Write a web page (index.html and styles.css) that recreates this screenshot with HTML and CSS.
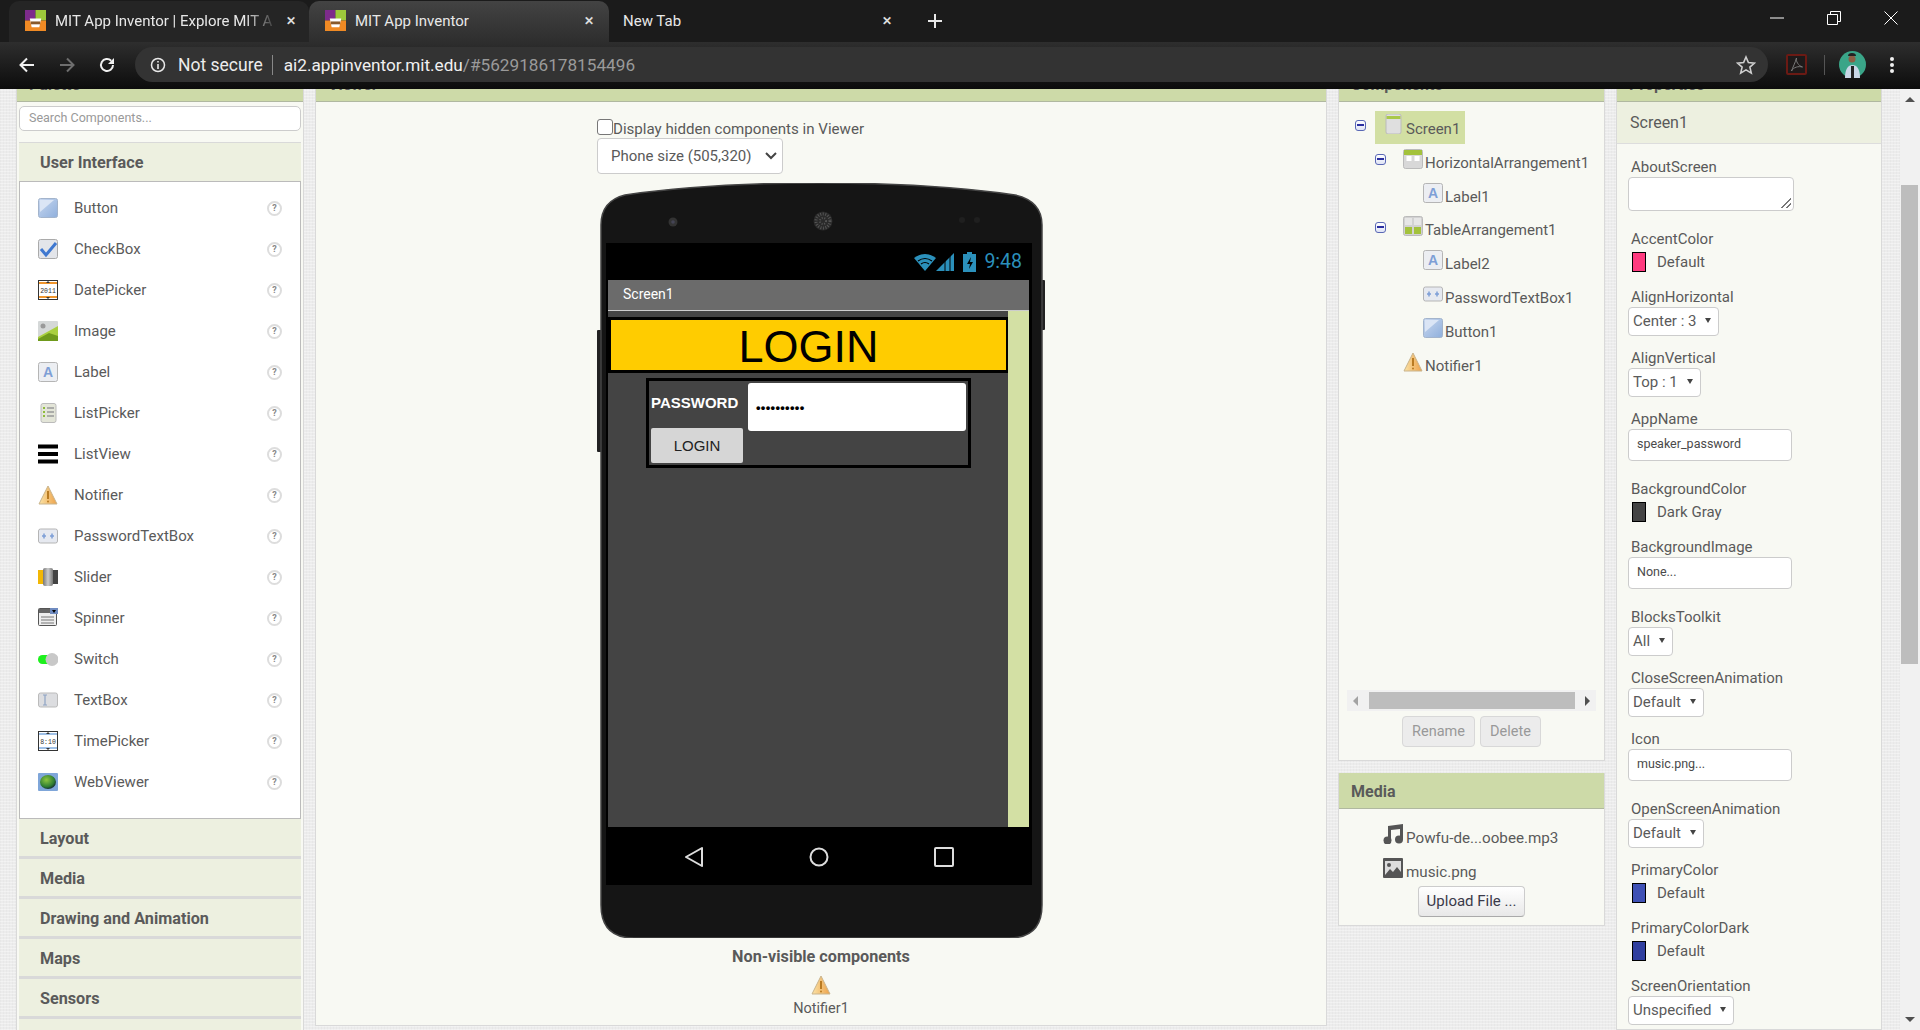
FILE: index.html
```html
<!DOCTYPE html>
<html lang="en">
<head>
  <meta charset="UTF-8">
  <title>MIT App Inventor</title>
  <link rel="stylesheet" href="styles.css">
</head>
<body>
  <svg class="sprites" width="0" height="0">
    <defs>
      <linearGradient id="g-btn" x1="0" y1="0" x2="1" y2="1"><stop offset="0" stop-color="#c9d8ef"/><stop offset="1" stop-color="#8fafdc"/></linearGradient>
      <linearGradient id="g-warn" x1="0" y1="0" x2="1" y2="0"><stop offset="0" stop-color="#fbe3a6"/><stop offset="1" stop-color="#eda24a"/></linearGradient>
      <linearGradient id="g-knob" x1="0" y1="0" x2="1" y2="0"><stop offset="0" stop-color="#777"/><stop offset=".5" stop-color="#ccc"/><stop offset="1" stop-color="#777"/></linearGradient>
      <radialGradient id="g-globe" cx=".4" cy=".35" r=".7"><stop offset="0" stop-color="#8dc63f"/><stop offset=".7" stop-color="#2e7d32"/><stop offset="1" stop-color="#123"/></radialGradient>
    </defs>
    <symbol id="i-button" viewBox="0 0 20 20"><rect x=".5" y=".5" width="19" height="19" rx="2" fill="url(#g-btn)" stroke="#a3b4cc"/><path d="M2 2h14L2 14z" fill="#dbe5f5"/></symbol>
    <symbol id="i-check" viewBox="0 0 20 20"><rect x=".5" y=".5" width="19" height="19" rx="2" fill="#e3e5ea" stroke="#aaa"/><path d="M3 10l5 6L18 4" fill="none" stroke="#3f78d0" stroke-width="3"/></symbol>
    <symbol id="i-date" viewBox="0 0 20 20"><rect x=".5" y=".5" width="19" height="19" fill="#fff" stroke="#333"/><path d="M1 3h18M1 17h18" stroke="#f0962e" stroke-width="2"/><path d="M10 1l-2 2h4zM10 19l-2-2h4z" fill="#333"/></symbol>
    <symbol id="i-image" viewBox="0 0 20 20"><rect width="20" height="20" rx="1" fill="#d5d8d8"/><circle cx="5" cy="5" r="2.500" fill="#999"/><path d="M0 16L20 5v15H0z" fill="#a9cf3f"/><path d="M0 18l11-6 9 3v5H0z" fill="#6f9a1c"/></symbol>
    <symbol id="i-label" viewBox="0 0 20 20"><rect x=".5" y=".5" width="19" height="19" rx="2" fill="#eceef2" stroke="#b5b5b5"/></symbol>
    <symbol id="i-listpicker" viewBox="0 0 20 20"><rect x="3" y=".5" width="15" height="19" rx="2" fill="#e3e5d8" stroke="#bbb"/><path d="M5 5h2M5 9h2M5 13h2" stroke="#8dbb3a" stroke-width="2"/><path d="M9 5h7M9 9h7M9 13h7" stroke="#999" stroke-width="1.500"/></symbol>
    <symbol id="i-listview" viewBox="0 0 20 20"><path d="M0 2.500h20M0 10h20M0 17.500h20" stroke="#000" stroke-width="4"/></symbol>
    <symbol id="i-notifier" viewBox="0 0 20 20"><path d="M10 1L1 19h18z" fill="url(#g-warn)" stroke="#c9b48c"/><path d="M10 6v8" stroke="#b97b22" stroke-width="2"/><circle cx="10" cy="16.500" r="1" fill="#b97b22"/></symbol>
    <symbol id="i-password" viewBox="0 0 20 20"><rect x=".5" y="3" width="19" height="14" rx="2" fill="#e6e9f0" stroke="#b5b5b5"/><path d="M6 7.500v5M4 10h4M14 7.500v5M12 10h4" stroke="#7e9fd6" stroke-width="1.500"/></symbol>
    <symbol id="i-slider" viewBox="0 0 20 20"><rect y="3" width="6" height="14" fill="#f2b705"/><rect x="14" y="3" width="6" height="14" fill="#444"/><rect x="5" y="1" width="10" height="18" rx="2" fill="url(#g-knob)"/></symbol>
    <symbol id="i-spinner" viewBox="0 0 20 20"><rect x=".5" y=".5" width="18" height="17" rx="1" fill="#eee" stroke="#555"/><rect x="1" y="1" width="12" height="4" fill="#666"/><rect x="12" y="0" width="8" height="6" fill="#6f8bc0"/><path d="M14 2h4l-2 3z" fill="#000"/><path d="M3 9h13M3 12h13M3 15h13" stroke="#777"/></symbol>
    <symbol id="i-switch" viewBox="0 0 20 20"><rect y="6" width="14" height="9" rx="4.500" fill="#1df01d"/><circle cx="14" cy="10.500" r="6.500" fill="#c8c8c8"/></symbol>
    <symbol id="i-textbox" viewBox="0 0 20 20"><rect x=".5" y="3" width="19" height="14" rx="2" fill="#dcdde0" stroke="#bbb"/><path d="M5 5h4M5 15h4M7 5v10" stroke="#8ea3c4" stroke-width="1.200" fill="none"/></symbol>
    <symbol id="i-time" viewBox="0 0 20 20"><rect x=".5" y=".5" width="19" height="19" fill="#fff" stroke="#333"/><path d="M1 3h18M1 17h18" stroke="#9fc0e6" stroke-width="2"/><path d="M10 1l-2 2h4zM10 19l-2-2h4z" fill="#333"/></symbol>
    <symbol id="i-web" viewBox="0 0 20 20"><rect y="1" width="20" height="18" rx="1" fill="#7fa6d9"/><ellipse cx="10" cy="10" rx="8" ry="7" fill="url(#g-globe)"/></symbol>
    <symbol id="i-screen" viewBox="0 0 20 20"><rect x="2" y="0" width="15" height="20" rx="2" fill="#dfdfdf" stroke="#bbb"/><path d="M2.500 2h14v3h-14z" fill="#a9c84a"/></symbol>
    <symbol id="i-harr" viewBox="0 0 20 20"><rect x=".5" y=".5" width="19" height="19" rx="2" fill="#d8d8d8" stroke="#bbb"/><path d="M1 1h18v5H1z" fill="#a3c23c"/><rect x="3.500" y="7" width="5" height="5" fill="#fff"/><rect x="11.500" y="7" width="5" height="5" fill="#fff"/></symbol>
    <symbol id="i-tarr" viewBox="0 0 20 20"><rect x=".5" y=".5" width="19" height="19" rx="2" fill="#d2d2d2" stroke="#bbb"/><rect x="2" y="2" width="7" height="7" fill="#e6e6e6"/><rect x="11" y="2" width="7" height="7" fill="#e6e6e6"/><rect x="2" y="11" width="7" height="7" fill="#a3c23c"/><rect x="11" y="11" width="7" height="7" fill="#a3c23c"/></symbol>
    <symbol id="i-music" viewBox="0 0 20 20"><path d="M5 2l15-2v15h-3V5L8 6v11H5z" fill="#555"/><circle cx="4.500" cy="16.500" r="4" fill="#555"/><circle cx="16" cy="15.500" r="4" fill="#555"/></symbol>
    <symbol id="i-file" viewBox="0 0 20 20"><rect width="20" height="20" rx="1" fill="#555"/><rect x="2" y="3" width="16" height="14" fill="#ddd"/><circle cx="6" cy="7" r="2" fill="#555"/><path d="M2 17l5-6 3 3 4-5 4 5v3z" fill="#555"/></symbol>
  </svg>

  <header class="chrome">
    <div class="tabstrip">
      <div class="tab">
        <svg class="favicon" viewBox="0 0 22 22"><rect width="11" height="11" fill="#7d2b8b"/><rect x="11" width="11" height="11" fill="#9cc93b"/><rect y="11" width="22" height="11" fill="#f08a24"/><path d="M5 9h12l-2 9H7z" fill="#fff"/><path d="M6 12h10v3H6z" fill="#8a5a2b"/></svg>
        <span class="tab-title fade">MIT App Inventor | Explore MIT A</span>
        <span class="tab-close">✕</span>
      </div>
      <div class="tab tab-active">
        <svg class="favicon" viewBox="0 0 22 22"><rect width="11" height="11" fill="#7d2b8b"/><rect x="11" width="11" height="11" fill="#9cc93b"/><rect y="11" width="22" height="11" fill="#f08a24"/><path d="M5 9h12l-2 9H7z" fill="#fff"/><path d="M6 12h10v3H6z" fill="#8a5a2b"/></svg>
        <span class="tab-title">MIT App Inventor</span>
        <span class="tab-close">✕</span>
      </div>
      <div class="tab tab-plain">
        <span class="tab-title">New Tab</span>
        <span class="tab-close">✕</span>
      </div>
      <svg class="newtab" viewBox="0 0 16 16"><path d="M8 1v14M1 8h14" stroke="#e8e8e8" stroke-width="2"/></svg>
      <div class="winbtns">
        <svg viewBox="0 0 14 14"><path d="M0 7h14" stroke="#fff"/></svg>
        <svg viewBox="0 0 14 14"><path d="M.5 3.500h10v10H.5zM3.500 3.500v-3h10v10h-3" fill="none" stroke="#fff"/></svg>
        <svg viewBox="0 0 14 14"><path d="M.5.500l13 13M13.500.500l-13 13" stroke="#fff"/></svg>
      </div>
    </div>
    <div class="toolbar">
      <svg class="tb-icon" viewBox="0 0 16 16"><path d="M15 8H2M8 1.500L1.500 8 8 14.500" fill="none" stroke="#f0f0f0" stroke-width="2"/></svg>
      <svg class="tb-icon" viewBox="0 0 16 16"><path d="M1 8h13M8 1.500L14.500 8 8 14.500" fill="none" stroke="#6e6e6e" stroke-width="2"/></svg>
      <svg class="tb-icon" viewBox="0 0 16 16"><path d="M14 8a6 6 0 1 1-1.800-4.300" fill="none" stroke="#f0f0f0" stroke-width="2"/><path d="M15 1v6H9z" fill="#f0f0f0"/></svg>
      <div class="omnibox">
        <svg class="info" viewBox="0 0 16 16"><circle cx="8" cy="8" r="6.500" fill="none" stroke="#e8e8e8" stroke-width="1.500"/><path d="M8 7v5M8 4v1.600" stroke="#e8e8e8" stroke-width="1.600"/></svg>
        <span class="not-secure">Not secure</span>
        <span class="omni-sep"></span>
        <span class="url">ai2.appinventor.mit.edu<span class="url-dim">/#5629186178154496</span></span>
        <svg class="star" viewBox="0 0 20 20"><path d="M10 2l2.400 5.600 6.100.5-4.600 4 1.400 6L10 14.900 4.700 18.100l1.400-6-4.600-4 6.100-.5z" fill="none" stroke="#cfcfcf" stroke-width="1.600"/></svg>
      </div>
      <svg class="pdf" viewBox="0 0 21 21"><rect x="1" y="1" width="19" height="19" rx="1" fill="#1e1a1a" stroke="#6b1a14" stroke-width="2"/><path d="M10.500 4c-1 3 2 8 6 9-4-1-9 0-11 4 1-3 4-9 5-13z" fill="none" stroke="#7a7a7a"/></svg>
      <span class="tb-sep"></span>
      <svg class="avatar" viewBox="0 0 27 27"><circle cx="13.500" cy="13.500" r="13.500" fill="#3aa588"/><path d="M6 27c0-9 3-13 7.500-13S21 18 21 27z" fill="#c9d6e6"/><path d="M12 15h3v12h-3z" fill="#222"/><circle cx="13" cy="8" r="3.500" fill="#8a5f45"/><path d="M9 5a4 3 0 0 1 8 0z" fill="#222"/></svg>
      <svg class="dots" viewBox="0 0 4 16"><circle cx="2" cy="2" r="2" fill="#f0f0f0"/><circle cx="2" cy="8" r="2" fill="#f0f0f0"/><circle cx="2" cy="14" r="2" fill="#f0f0f0"/></svg>
    </div>
  </header>

  <main class="page">
    <section class="panel palette">
      <div class="panel-head">Palette</div>
      <div class="palette-inner">
        <div class="search">Search Components...</div>
        <div class="cat cat-open">User Interface</div>
        <ul class="comp-list">
          <li><svg class="icon"><use href="#i-button"/></svg><span class="comp-name">Button</span><span class="help">?</span></li>
          <li><svg class="icon"><use href="#i-check"/></svg><span class="comp-name">CheckBox</span><span class="help">?</span></li>
          <li><svg class="icon" viewBox="0 0 20 20"><use href="#i-date"/><text x="10" y="13" class="icon-text">2011</text></svg><span class="comp-name">DatePicker</span><span class="help">?</span></li>
          <li><svg class="icon"><use href="#i-image"/></svg><span class="comp-name">Image</span><span class="help">?</span></li>
          <li><svg class="icon" viewBox="0 0 20 20"><use href="#i-label"/><text x="10" y="15" class="icon-letter">A</text></svg><span class="comp-name">Label</span><span class="help">?</span></li>
          <li><svg class="icon"><use href="#i-listpicker"/></svg><span class="comp-name">ListPicker</span><span class="help">?</span></li>
          <li><svg class="icon"><use href="#i-listview"/></svg><span class="comp-name">ListView</span><span class="help">?</span></li>
          <li><svg class="icon"><use href="#i-notifier"/></svg><span class="comp-name">Notifier</span><span class="help">?</span></li>
          <li><svg class="icon"><use href="#i-password"/></svg><span class="comp-name">PasswordTextBox</span><span class="help">?</span></li>
          <li><svg class="icon"><use href="#i-slider"/></svg><span class="comp-name">Slider</span><span class="help">?</span></li>
          <li><svg class="icon"><use href="#i-spinner"/></svg><span class="comp-name">Spinner</span><span class="help">?</span></li>
          <li><svg class="icon"><use href="#i-switch"/></svg><span class="comp-name">Switch</span><span class="help">?</span></li>
          <li><svg class="icon"><use href="#i-textbox"/></svg><span class="comp-name">TextBox</span><span class="help">?</span></li>
          <li><svg class="icon" viewBox="0 0 20 20"><use href="#i-time"/><text x="10" y="13" class="icon-text">8:10</text></svg><span class="comp-name">TimePicker</span><span class="help">?</span></li>
          <li><svg class="icon"><use href="#i-web"/></svg><span class="comp-name">WebViewer</span><span class="help">?</span></li>
        </ul>
        <div class="cat">Layout</div>
        <div class="cat">Media</div>
        <div class="cat">Drawing and Animation</div>
        <div class="cat">Maps</div>
        <div class="cat">Sensors</div>
        <div class="cat"></div>
      </div>
    </section>

    <section class="panel viewer">
      <div class="panel-head">Viewer</div>
      <div class="viewer-body">
        <label class="hidden-toggle"><span class="fake-check"></span>Display hidden components in Viewer</label>
        <div class="size-select">Phone size (505,320)<svg viewBox="0 0 12 8"><path d="M1 1l5 5 5-5" fill="none" stroke="#444" stroke-width="2"/></svg></div>

        <div class="phone">
          <svg class="phone-shell" viewBox="0 0 450 755">
            <rect x="0" y="147" width="8" height="122" rx="1" fill="#222"/>
            <rect x="442" y="97" width="6" height="50" rx="1" fill="#222"/>
            <path d="M4 42Q4 18 28 12Q110 0 223 0Q336 0 418 12Q445 18 445 42V722Q445 755 412 755H37Q4 755 4 722Z" fill="#151515" stroke="#444" stroke-width="1.500"/>
            <circle cx="76" cy="39" r="4.500" fill="#333"/>
            <circle cx="76" cy="39" r="1.800" fill="#445"/>
            <circle cx="226" cy="38" r="9.500" fill="#2a2a2a"/>
            <circle cx="226" cy="38" r="7" fill="none" stroke="#555" stroke-width="3" stroke-dasharray="1 1.500"/>
            <circle cx="226" cy="38" r="3" fill="none" stroke="#555" stroke-width="2" stroke-dasharray="1 1.500"/>
            <circle cx="365" cy="37" r="3" fill="#1f1f1f"/>
            <circle cx="380" cy="37" r="3" fill="#1f1f1f"/>
          </svg>
          <div class="screen">
            <div class="statusbar">
              <svg class="status-icons" viewBox="0 0 62 20"><path d="M0 6Q11-2 22 6L11 19z" fill="#2b90bb"/><path d="M4 9Q11 4 18 9M7 12Q11 9 15 12" stroke="#000" stroke-width="1.200" fill="none"/><path d="M22 19L40 1v18z" fill="#2b90bb"/><path d="M31 19V9M36 19V4" stroke="#000"/><rect x="49" y="2" width="13" height="18" fill="#2b90bb"/><rect x="53" y="0" width="5" height="2" fill="#2b90bb"/><path d="M57 5l-4 7h3l-1 5 4-7h-3z" fill="#000"/></svg>
              <span class="clock">9:48</span>
            </div>
            <div class="titlebar">Screen1</div>
            <div class="app-area">
              <div class="app-form">
                <div class="login-title">LOGIN</div>
                <div class="login-table">
                  <div class="pw-label">PASSWORD</div>
                  <div class="pw-input">••••••••••</div>
                  <div class="login-btn">LOGIN</div>
                </div>
              </div>
              <div class="app-scroll"></div>
            </div>
            <div class="navbar">
              <svg viewBox="0 0 20 22"><path d="M18 2L2 11l16 9z" fill="none" stroke="#ddd" stroke-width="2" stroke-linejoin="round"/></svg>
              <svg viewBox="0 0 20 22"><circle cx="10" cy="11" r="8.500" fill="none" stroke="#ddd" stroke-width="2"/></svg>
              <svg viewBox="0 0 20 22"><rect x="1" y="2" width="18" height="18" rx="1" fill="none" stroke="#ddd" stroke-width="2"/></svg>
            </div>
          </div>
        </div>
        <div class="nonvisible">
          <div class="nv-title">Non-visible components</div>
          <svg class="nv-icon"><use href="#i-notifier"/></svg>
          <div class="nv-name">Notifier1</div>
        </div>
      </div>
    </section>

    <div class="side-col">
      <section class="panel components">
        <div class="panel-head">Components</div>
        <div class="tree">
          <div class="tree-row row-root"><span class="minus"></span><span class="selected"><svg class="icon"><use href="#i-screen"/></svg>Screen1</span></div>
          <div class="tree-row lvl1"><span class="minus"></span><svg class="icon"><use href="#i-harr"/></svg>HorizontalArrangement1</div>
          <div class="tree-row lvl2"><svg class="icon" viewBox="0 0 20 20"><use href="#i-label"/><text x="10" y="15" class="icon-letter">A</text></svg>Label1</div>
          <div class="tree-row lvl1"><span class="minus"></span><svg class="icon"><use href="#i-tarr"/></svg>TableArrangement1</div>
          <div class="tree-row lvl2"><svg class="icon" viewBox="0 0 20 20"><use href="#i-label"/><text x="10" y="15" class="icon-letter">A</text></svg>Label2</div>
          <div class="tree-row lvl2"><svg class="icon"><use href="#i-password"/></svg>PasswordTextBox1</div>
          <div class="tree-row lvl2"><svg class="icon"><use href="#i-button"/></svg>Button1</div>
          <div class="tree-row lvl1 no-minus"><svg class="icon"><use href="#i-notifier"/></svg>Notifier1</div>
        </div>
        <div class="hscroll">
          <span class="arrow-left"></span>
          <span class="hthumb"></span>
          <span class="arrow-right"></span>
        </div>
        <div class="comp-btns">
          <span class="btn-off">Rename</span>
          <span class="btn-off">Delete</span>
        </div>
      </section>

      <section class="panel media">
        <div class="panel-head">Media</div>
        <div class="media-row"><svg class="icon"><use href="#i-music"/></svg>Powfu-de...oobee.mp3</div>
        <div class="media-row"><svg class="icon"><use href="#i-file"/></svg>music.png</div>
        <div class="upload">Upload File ...</div>
      </section>
    </div>

    <section class="panel props">
      <div class="panel-head">Properties</div>
      <div class="props-title">Screen1</div>
      <div class="props-body">
        <div class="prop prop-area"><div class="prop-name">AboutScreen</div><div class="textarea"></div></div>
        <div class="prop prop-color"><div class="prop-name">AccentColor</div><div class="color-row"><span class="swatch swatch-pink"></span>Default</div></div>
        <div class="prop prop-select"><div class="prop-name">AlignHorizontal</div><div class="dropdown">Center : 3</div></div>
        <div class="prop prop-select"><div class="prop-name">AlignVertical</div><div class="dropdown">Top : 1</div></div>
        <div class="prop prop-input"><div class="prop-name">AppName</div><div class="textbox">speaker_password</div></div>
        <div class="prop prop-color"><div class="prop-name">BackgroundColor</div><div class="color-row"><span class="swatch swatch-gray"></span>Dark Gray</div></div>
        <div class="prop prop-input"><div class="prop-name">BackgroundImage</div><div class="textbox">None...</div></div>
        <div class="prop prop-select"><div class="prop-name">BlocksToolkit</div><div class="dropdown">All</div></div>
        <div class="prop prop-select"><div class="prop-name">CloseScreenAnimation</div><div class="dropdown">Default</div></div>
        <div class="prop prop-input"><div class="prop-name">Icon</div><div class="textbox">music.png...</div></div>
        <div class="prop prop-select"><div class="prop-name">OpenScreenAnimation</div><div class="dropdown">Default</div></div>
        <div class="prop prop-color"><div class="prop-name">PrimaryColor</div><div class="color-row"><span class="swatch swatch-blue"></span>Default</div></div>
        <div class="prop prop-color"><div class="prop-name">PrimaryColorDark</div><div class="color-row"><span class="swatch swatch-navy"></span>Default</div></div>
        <div class="prop prop-select"><div class="prop-name">ScreenOrientation</div><div class="dropdown">Unspecified</div></div>
      </div>
    </section>
  </main>

  <div class="page-scroll">
    <span class="arrow-up"></span>
    <span class="vthumb"></span>
    <span class="arrow-down"></span>
  </div>
</body>
</html>
```

FILE: styles.css
```css
* {
  box-sizing: border-box;
}
html, body {
  margin: 0;
  height: 1030px;
  overflow: hidden;
}
body {
  font-family: Roboto, Arial, sans-serif;
  font-size: 15px;
  color: #5a5a5a;
  background-color: #ececec;
  background-image:
    repeating-linear-gradient(0deg, rgba(255,255,255,.35) 0 1px, transparent 1px 3px),
    repeating-linear-gradient(90deg, rgba(0,0,0,.02) 0 1px, transparent 1px 3px);
}
.sprites {
  position: absolute;
}
.icon-text {
  font: 6.5px "Liberation Mono", monospace;
  text-anchor: middle;
  fill: #333;
}
.icon-letter {
  font: bold 14px "Liberation Sans", sans-serif;
  text-anchor: middle;
  fill: #7e9fd6;
}

/* browser chrome */
.chrome {
  position: relative;
  z-index: 5;
  height: 89px;
  color: #e8e8e8;
}
.tabstrip {
  height: 42px;
  background: #1b1b1b;
  display: flex;
  align-items: flex-end;
  padding-left: 9px;
}
.tab {
  width: 300px;
  height: 41px;
  background: #252525;
  border-radius: 10px 10px 0 0;
  display: flex;
  align-items: center;
  padding: 0 13px 2px 16px;
  font-size: 15px;
}
.tab-active {
  background: linear-gradient(#434343, #2e2e2e);
  padding-right: 15px;
}
.tab-plain {
  background: none;
  width: 296px;
  padding-left: 14px;
}
.favicon {
  width: 21px;
  height: 21px;
  margin-right: 9px;
  flex: none;
}
.tab-title {
  flex: 1;
  white-space: nowrap;
}
.fade {
  -webkit-mask-image: linear-gradient(90deg, #000 85%, transparent);
  mask-image: linear-gradient(90deg, #000 85%, transparent);
}
.tab-close {
  font-size: 12px;
  font-weight: bold;
  margin-left: 8px;
  color: #ddd;
}
.newtab {
  width: 16px;
  height: 16px;
  margin: 0 0 13px 22px;
}
.winbtns {
  margin-left: auto;
  align-self: flex-start;
  display: flex;
  gap: 43px;
  padding: 11px 22px 0 0;
}
.winbtns svg {
  width: 14px;
  height: 14px;
}
.toolbar {
  height: 47px;
  background: linear-gradient(#2e2e2e, #0c0c0c);
  display: flex;
  align-items: center;
  padding: 0 0 2px 19px;
}
.tb-icon {
  width: 16px;
  height: 16px;
  margin-right: 24px;
}
.omnibox {
  width: 1633px;
  height: 35px;
  margin-left: -4px;
  background: #333;
  border-radius: 18px;
  display: flex;
  align-items: center;
  padding-left: 15px;
  font-size: 17.5px;
}
.info {
  width: 16px;
  height: 16px;
  margin-right: 12px;
}
.not-secure {
  color: #ececec;
}
.omni-sep {
  width: 1px;
  height: 20px;
  background: #888;
  margin: 0 11px 0 9px;
}
.url {
  font-size: 17.2px;
  color: #f0f0f0;
}
.url-dim {
  color: #9a9a9a;
}
.star {
  width: 20px;
  height: 20px;
  margin-left: auto;
  margin-right: 12px;
}
.pdf {
  width: 21px;
  height: 21px;
  margin-left: 18px;
}
.tb-sep {
  width: 1px;
  height: 20px;
  background: #555;
  margin: 0 14px 0 17px;
}
.avatar {
  width: 27px;
  height: 27px;
}
.dots {
  width: 4px;
  height: 16px;
  margin-left: 24px;
}

/* page columns */
.page {
  display: flex;
  align-items: flex-start;
  margin-top: -24px;
  padding-left: 16px;
  height: 965px;
  overflow: hidden;
}
.panel {
  background: #f8f9f3;
  border: 1px solid #d9d9d9;
  border-top: 0;
}
.panel-head {
  height: 37px;
  line-height: 40px;
  background: #cddaa8;
  border-bottom: 1px solid #b0b8a0;
  font-size: 16px;
  font-weight: bold;
  padding-left: 12px;
  overflow: hidden;
}

/* palette */
.palette {
  width: 288px;
  flex: none;
}
.palette-inner {
  padding: 4px 2px 0;
}
.search {
  height: 25px;
  line-height: 22px;
  background: #fff;
  border: 1px solid #ccc;
  border-radius: 5px;
  padding-left: 9px;
  font-size: 12.5px;
  color: #999;
  margin-bottom: 11px;
}
.cat {
  height: 40px;
  line-height: 39px;
  background: #edf0e0;
  border-bottom: 3px solid #d9d9d9;
  padding-left: 21px;
  font-size: 16.2px;
  font-weight: bold;
}
.cat-open {
  height: 39px;
  line-height: 39px;
  border-top: 1px solid #d9d9d9;
  border-bottom: 0;
}
.comp-list {
  list-style: none;
  margin: 0;
  padding: 5px 0 16px;
  background: #fff;
  border: 1px solid #bbb;
}
.comp-list li {
  height: 41px;
  display: flex;
  align-items: center;
  padding-left: 18px;
}
.icon {
  width: 20px;
  height: 20px;
  flex: none;
}
.comp-name {
  margin-left: 16px;
  flex: 1;
}
.help {
  width: 15px;
  height: 15px;
  line-height: 11px;
  margin: 2px 18px 0 0;
  border: 2px solid #ddd;
  border-radius: 50%;
  font-size: 9px;
  font-weight: bold;
  text-align: center;
  color: #888;
}

/* viewer */
.viewer {
  width: 1012px;
  flex: none;
  margin-left: 11px;
  height: 961px;
}
.viewer-body {
  padding: 16px 0 0 281px;
}
.hidden-toggle {
  display: flex;
  align-items: center;
  height: 20px;
  padding-top: 1px;
  font-size: 15.100px;
}
.fake-check {
  width: 16px;
  height: 16px;
  margin-top: -4px;
  background: #fff;
  border: 1px solid #777;
  border-radius: 3px;
}
.size-select {
  width: 186px;
  height: 36px;
  background: #fff;
  border: 1px solid #ccc;
  border-radius: 4px;
  display: flex;
  align-items: center;
  justify-content: space-between;
  padding: 0 5px 0 13px;
}
.size-select svg {
  width: 12px;
  height: 8px;
}
.phone {
  position: relative;
  width: 450px;
  height: 755px;
  margin: 9px 0 0 0;
  padding: 60px 0 0 9px;
}
.phone-shell {
  position: absolute;
  left: 0;
  top: 0;
  width: 450px;
  height: 755px;
}
.screen {
  position: relative;
  width: 426px;
  height: 642px;
  background: #000;
}
.statusbar {
  height: 37px;
  display: flex;
  justify-content: flex-end;
  align-items: center;
  padding-right: 10px;
}
.status-icons {
  width: 62px;
  height: 20px;
  margin-right: 8px;
}
.clock {
  font-size: 19.5px;
  color: #2b90bb;
}
.titlebar {
  height: 31px;
  line-height: 28px;
  margin: 0 3px 0 2px;
  background: #6b6b6b;
  border-bottom: 1px solid #ccc;
  padding-left: 15px;
  font-size: 14px;
  color: #fff;
}
.app-area {
  height: 516px;
  margin: 0 3px 0 2px;
  display: flex;
}
.app-form {
  width: 400px;
  background: #444;
  padding-top: 6px;
}
.app-scroll {
  flex: 1;
  background: #d3e0a4;
}
.login-title {
  height: 56px;
  background: #fc0;
  border: solid #000;
  border-width: 3px 2px 3px 3px;
  font: 45px/53px "Liberation Sans", Arial, sans-serif;
  color: #000;
  text-align: center;
}
.login-table {
  width: 325px;
  height: 90px;
  margin: 5px 0 0 38px;
  border: 3px solid #000;
  padding: 2px 0 0 2px;
  display: grid;
  grid-template-columns: 97px 218px;
  grid-template-rows: 45px 35px;
  font-family: "Liberation Sans", Arial, sans-serif;
}
.pw-label {
  color: #fff;
  font-weight: bold;
  font-size: 15px;
  padding-top: 11px;
}
.pw-input {
  grid-column: 2;
  grid-row: 1 / 3;
  height: 48px;
  line-height: 50px;
  background: #fff;
  border-radius: 3px;
  padding-left: 8px;
  font-size: 13px;
  font-weight: bold;
  letter-spacing: .3px;
  color: #000;
}
.login-btn {
  grid-column: 1;
  width: 92px;
  height: 35px;
  line-height: 35px;
  background: #d6d6d6;
  border-radius: 2px;
  text-align: center;
  font-size: 15px;
  color: #222;
}
.navbar {
  height: 58px;
  display: flex;
  align-items: center;
  padding: 2px 0 0 78px;
  gap: 105px;
}
.navbar svg {
  width: 20px;
  height: 22px;
}
.nonvisible {
  width: 440px;
  margin-left: 4px;
  text-align: center;
  padding-top: 9px;
}
.nv-title {
  font-size: 16.2px;
  font-weight: bold;
  line-height: 20px;
}
.nv-icon {
  display: block;
  width: 20px;
  height: 20px;
  margin: 8px auto 4px;
}
.nv-name {
  font-size: 14.5px;
  line-height: 20px;
}

/* components + media */
.side-col {
  width: 267px;
  flex: none;
  margin-left: 11px;
}
.components {
  height: 696px;
}
.tree {
  height: 588px;
  padding-top: 9px;
}
.tree-row {
  height: 33.8px;
  display: flex;
  align-items: center;
  white-space: nowrap;
  font-size: 15px;
}
.tree-row .icon {
  margin-bottom: 8px;
  margin-right: 2px;
}
.row-root {
  height: 33px;
  margin-bottom: 2px;
  padding-left: 16px;
}
.selected {
  width: 90px;
  height: 33px;
  margin-left: 9px;
  background: #d2dfa3;
  display: flex;
  align-items: center;
  padding: 2px 0 0 9px;
}
.selected .icon {
  margin-right: 2px;
  margin-bottom: 10px;
}
.minus {
  width: 11px;
  height: 11px;
  margin-bottom: 6px;
  background: linear-gradient(#fff, #dfe4f5);
  border: 1px solid #5a68b5;
  border-radius: 3px;
  position: relative;
}
.row-root .minus {
  margin-bottom: 4px;
}
.minus::after {
  content: "";
  position: absolute;
  left: 1px;
  right: 1px;
  top: 3px;
  height: 2px;
  background: #2a2fa0;
}
.lvl1 {
  padding-left: 36px;
}
.lvl1 .icon {
  margin-left: 17px;
}
.lvl2 {
  padding-left: 84px;
}
.no-minus {
  padding-left: 47px;
}
.hscroll {
  height: 21px;
  margin: 0 8px;
  background: #f1f1f1;
  display: flex;
  align-items: center;
  justify-content: space-between;
  padding: 0 6px;
}
.hthumb {
  width: 206px;
  height: 17px;
  background: #bdbdbd;
}
.arrow-left {
  border: solid transparent;
  border-width: 5px 5px 5px 0;
  border-right-color: #a3a3a3;
}
.arrow-right {
  border: solid transparent;
  border-width: 5px 0 5px 5px;
  border-left-color: #505050;
}
.comp-btns {
  display: flex;
  justify-content: center;
  gap: 5px;
  margin-top: 5px;
}
.btn-off {
  height: 31px;
  line-height: 29px;
  padding: 0 9px;
  background: #ececec;
  border: 1px solid #d8d8d8;
  border-radius: 4px;
  color: #999;
  font-size: 14.5px;
}
.media {
  height: 153px;
  margin-top: 12px;
  border-top: 1px solid #d9d9d9;
}
.media .panel-head {
  height: 36px;
  line-height: 37px;
  margin: -1px 0 12px;
}
.media-row {
  height: 34px;
  display: flex;
  align-items: center;
  padding-left: 44px;
  font-size: 15.2px;
}
.media-row .icon {
  margin-right: 3px;
  margin-bottom: 8px;
}
.upload {
  width: 107px;
  height: 31px;
  line-height: 29px;
  margin: -3px 0 0 79px;
  background: linear-gradient(#fff, #e8e8e8);
  border: 1px solid #ccc;
  border-bottom-color: #aaa;
  border-radius: 4px;
  text-align: center;
  color: #3a3a4a;
}

/* properties */
.props {
  width: 266px;
  flex: none;
  margin-left: 11px;
  height: 965px;
}
.props-title {
  height: 42px;
  line-height: 42px;
  background: #edf0e0;
  border-bottom: 1px solid #ddd;
  padding-left: 13px;
  font-size: 16px;
}
.props-body {
  padding: 13px 0 0 11px;
}
.prop-name {
  height: 20px;
  line-height: 20px;
  padding-left: 3px;
  font-size: 15px;
  white-space: nowrap;
}
.prop-area {
  height: 72px;
}
.prop-color {
  height: 58px;
}
.prop-select {
  height: 61px;
}
.prop-input {
  height: 70px;
}
.textarea {
  position: relative;
  width: 166px;
  height: 34px;
  background: #fff;
  border: 1px solid #ccc;
  border-radius: 4px;
}
.textarea::after {
  content: "";
  position: absolute;
  right: 2px;
  bottom: 2px;
  width: 10px;
  height: 10px;
  background: linear-gradient(135deg, transparent 45%, #777 45% 55%, transparent 55% 70%, #777 70% 80%, transparent 80%);
}
.color-row {
  display: flex;
  align-items: center;
  height: 20px;
  margin-top: 3px;
  padding-left: 4px;
}
.swatch {
  width: 14px;
  height: 20px;
  border: 1px solid #000;
  margin-right: 11px;
}
.swatch-pink { background: #ff3b7f; }
.swatch-gray { background: #444; }
.swatch-blue { background: #3f51b5; }
.swatch-navy { background: #303f9f; }
.dropdown {
  display: inline-flex;
  align-items: center;
  height: 29px;
  background: #fff;
  border: 1px solid #ccc;
  border-radius: 4px;
  padding: 0 7px 2px 4px;
  white-space: nowrap;
}
.dropdown::after {
  content: "";
  margin-left: 9px;
  border: solid transparent;
  border-width: 5px 3px 0;
  border-top-color: #444;
}
.textbox {
  width: 164px;
  height: 32px;
  line-height: 28px;
  background: #fff;
  border: 1px solid #ccc;
  border-radius: 4px;
  padding-left: 8px;
  font-size: 12.5px;
  color: #4a4a4a;
}

/* page scrollbar */
.page-scroll {
  position: absolute;
  right: 0;
  top: 89px;
  bottom: 0;
  width: 20px;
  background: #f1f1f1;
}
.vthumb {
  position: absolute;
  top: 96px;
  left: 1px;
  width: 17px;
  height: 479px;
  background: #bdbdbd;
}
.arrow-up, .arrow-down {
  position: absolute;
  left: 5px;
  border: solid transparent;
}
.arrow-up {
  top: 8px;
  border-width: 0 5px 5px;
  border-bottom-color: #505050;
}
.arrow-down {
  bottom: 8px;
  border-width: 5px 5px 0;
  border-top-color: #505050;
}
```
